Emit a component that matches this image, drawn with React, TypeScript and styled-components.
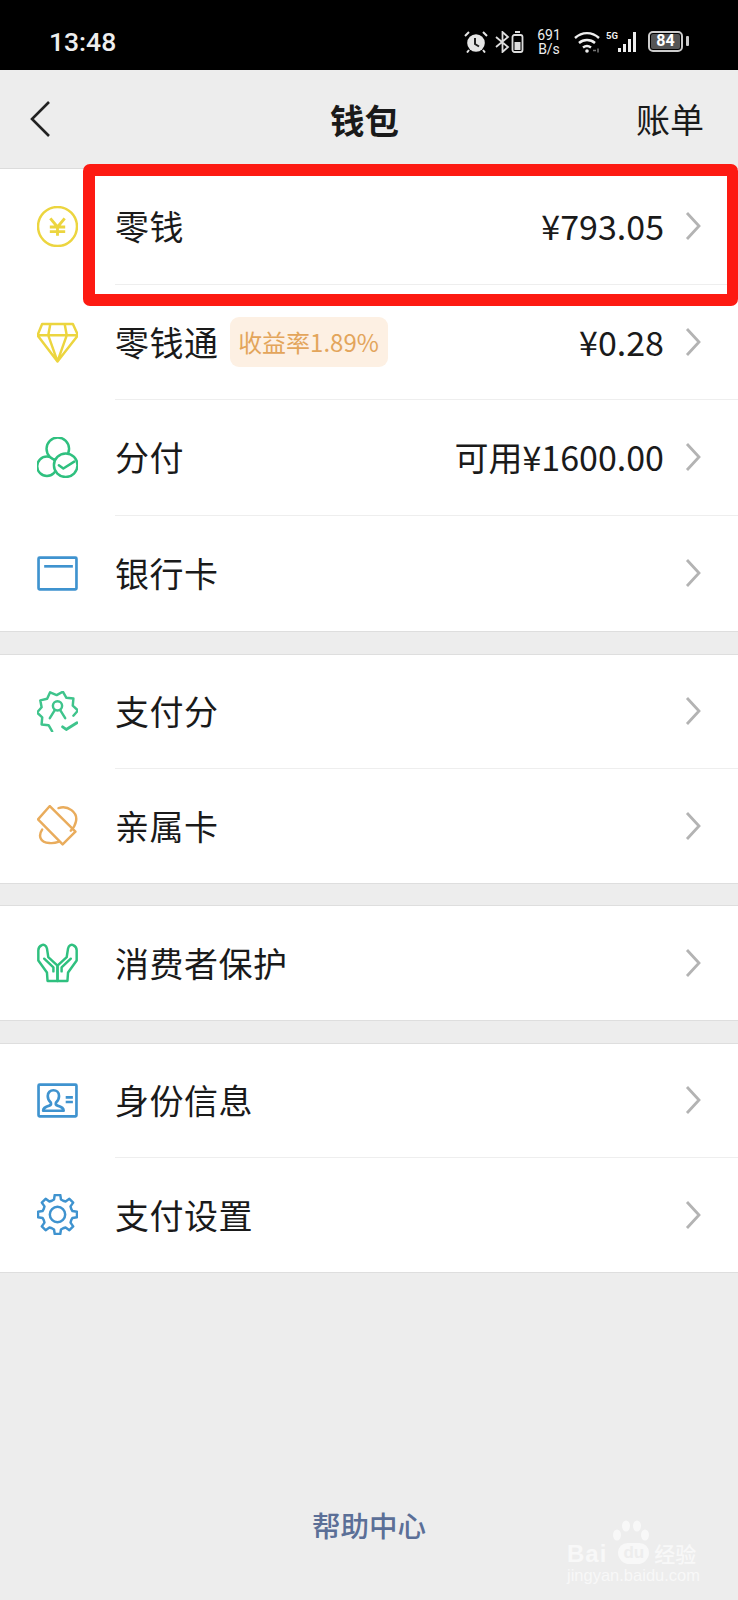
import React from "react";
import styled, { createGlobalStyle } from "styled-components";

const CJK = `"Noto Sans CJK SC", "Noto Sans", sans-serif`;

const GlobalStyle = createGlobalStyle`
  html, body {
    margin: 0;
    padding: 0;
    background: #ededed;
  }
  * {
    box-sizing: border-box;
  }
`;

const Page = styled.div`
  position: relative;
  width: 738px;
  height: 1600px;
  overflow: hidden;
  background: #ededed;
  font-family: ${CJK};
  color: #1a1a1a;
`;

const StatusBar = styled.div`
  height: 70px;
  background: #000;
  color: #eee;
  display: flex;
  align-items: center;
  padding: 13px 55px 0 49px;
  justify-content: space-between;
`;

const Clock = styled.span`
  font-family: Roboto, sans-serif;
  font-size: 26.5px;
  font-weight: 500;
`;

const StatusIcons = styled.div`
  display: flex;
  align-items: center;
`;

const Glyph = styled.svg<{ $gap?: number }>`
  display: block;
  margin-left: ${(p) => p.$gap ?? 0}px;
`;

const Speed = styled.div`
  font-family: Roboto, sans-serif;
  margin: 0 12px;
  width: 26px;
  text-align: center;
`;

const SpeedLine = styled.div`
  font-size: 14px;
  line-height: 14px;
  height: 14px;
`;

const BatteryBox = styled.div`
  width: 35px;
  height: 21px;
  margin-left: 8px;
  border: 2.5px solid #ccc;
  border-radius: 5px;
  padding: 1px;
  position: relative;
  display: flex;
  &::after {
    content: "";
    position: absolute;
    right: -7.5px;
    top: 3px;
    width: 2.5px;
    height: 10px;
    background: #ccc;
    border-radius: 1px;
  }
`;

const BatteryFill = styled.span`
  flex: 1;
  background: #555;
  border-radius: 2px;
  color: #fff;
  font-family: Roboto, sans-serif;
  font-weight: 700;
  font-size: 16px;
  line-height: 14px;
  text-align: center;
`;

const Header = styled.div`
  height: 99px;
  display: grid;
  grid-template-columns: 1fr auto 1fr;
  align-items: center;
  padding: 0 34px 0 25px;
  border-bottom: 1px solid #dcdcdc;
`;

const BackIcon = styled.svg`
  width: 24px;
  height: 38px;
  margin-left: 3px;
  display: block;
`;

const Title = styled.div`
  font-size: 34.5px;
  font-weight: 700;
  line-height: 1;
`;

const HeaderAction = styled.div`
  font-size: 34px;
  line-height: 1;
  justify-self: end;
`;

const Section = styled.div<{ $first?: boolean }>`
  background: #fff;
  margin-top: ${(p) => (p.$first ? 0 : 21.5)}px;
  border-bottom: 1px solid #dedede;
  border-top: ${(p) => (p.$first ? "none" : "1px solid #dedede")};
`;

const Row = styled.div<{ $tall?: boolean }>`
  height: ${(p) => (p.$tall ? 115.5 : 114)}px;
  display: flex;
  align-items: stretch;
  padding-left: 37px;
  &:last-child > div:last-child {
    border-bottom: none;
  }
`;

const IconSlot = styled.div`
  width: 41px;
  flex-shrink: 0;
  margin-right: 37px;
  display: flex;
  align-items: center;
  justify-content: center;
`;

const RowMain = styled.div`
  flex: 1;
  display: flex;
  align-items: center;
  padding-right: 37px;
  border-bottom: 1px solid #eeeeee;
`;

const Label = styled.span`
  font-size: 34px;
  line-height: 1;
  letter-spacing: 0.5px;
`;

const Badge = styled.span`
  margin-left: 11px;
  width: 158px;
  height: 50px;
  border-radius: 9px;
  background: #fdf0e3;
  color: #e3a55b;
  font-size: 24px;
  display: flex;
  align-items: center;
  justify-content: center;
  white-space: nowrap;
`;

const Value = styled.span`
  margin-left: auto;
  font-size: 34px;
  line-height: 1;
  color: #1a1a1a;
`;

const Chevron = styled.svg<{ $alone?: boolean }>`
  width: 16px;
  height: 30px;
  margin-left: ${(p) => (p.$alone ? "auto" : "21px")};
  flex-shrink: 0;
`;

const HelpLink = styled.div`
  margin-top: 234px;
  text-align: center;
  font-size: 28.5px;
  line-height: 36px;
  font-weight: 500;
  color: #5b6f97;
`;

const Highlight = styled.div`
  position: absolute;
  left: 83px;
  top: 164px;
  width: 655px;
  height: 142px;
  border: 12px solid #fd1a12;
  border-right-width: 11px;
  border-radius: 7px;
  pointer-events: none;
`;

const Watermark = styled.div`
  position: absolute;
  left: 567px;
  top: 1520px;
  width: 132px;
  color: #f8f8f8;
`;

const WatermarkTop = styled.div`
  height: 44px;
  position: relative;
  display: flex;
  align-items: flex-end;
`;

const WatermarkBai = styled.span`
  font-family: "Liberation Sans", sans-serif;
  font-weight: 700;
  font-size: 24px;
  line-height: 20px;
  letter-spacing: 1px;
`;

const WatermarkDu = styled.span`
  margin-left: 11px;
  width: 31px;
  height: 21px;
  border-radius: 10px 10px 12px 12px;
  background: #f8f8f8;
  color: #ededed;
  font-family: "Liberation Sans", sans-serif;
  font-weight: 700;
  font-size: 17px;
  line-height: 20px;
  text-align: center;
`;

const WatermarkJing = styled.span`
  margin-left: 5px;
  font-size: 21px;
  line-height: 22px;
  font-weight: 500;
`;

const WatermarkPaw = styled.svg`
  position: absolute;
  left: 45px;
  top: 0;
  width: 38px;
  height: 24px;
`;

const WatermarkUrl = styled.div`
  margin-top: 3px;
  font-family: "Liberation Sans", sans-serif;
  font-size: 16.5px;
  line-height: 17px;
  white-space: nowrap;
`;

const Line = ({ color, children, w = 2.4 }: { color: string; children: React.ReactNode; w?: number }) => (
  <svg width="41" height="41" viewBox="0 0 40 40" fill="none" stroke={color} strokeWidth={w} strokeLinecap="round" strokeLinejoin="round">
    {children}
  </svg>
);

// jagged outline of the pay-score badge, open at the lower right for the tick
const badgeOutline = (() => {
  const pts: string[] = [];
  for (let i = 0; i <= 19; i++) {
    const deg = 105 + i * 18;
    if (deg > 105 + 270) break;
    const r = i % 2 === 0 ? 20 : 16;
    const a = (deg * Math.PI) / 180;
    pts.push(`${(20 + r * Math.cos(a)).toFixed(1)} ${(20 + r * Math.sin(a)).toFixed(1)}`);
  }
  return "M" + pts.join("L");
})();

// eight-toothed cog
const gearOutline = (() => {
  const pts: string[] = [];
  for (let i = 0; i < 8; i++) {
    const c = (i * 45 - 90) * (Math.PI / 180);
    const at = (r: number, d: number) => {
      const a = c + (d * Math.PI) / 180;
      return `${(20 + r * Math.cos(a)).toFixed(1)} ${(20 + r * Math.sin(a)).toFixed(1)}`;
    };
    pts.push(at(14.5, -22.5), at(15, -13), at(19.2, -8), at(19.2, 8), at(15, 13));
  }
  return "M" + pts.join("L") + "Z";
})();

const CoinIcon = () => (
  <Line color="#ecd53f">
    <circle cx="20" cy="20" r="19" />
    <path d="M13 12l7 8.500 7-8.500M12.500 20.500h15M12.500 25h15M20 20.500V29" strokeWidth="2.800" strokeLinecap="butt" />
  </Line>
);

const DiamondIcon = () => (
  <Line color="#ecd53f">
    <path d="M5 2h30l5 11-20 25.500L.5 13zM.5 13h39M13 2l-2 11 9 25.500L29 13 27 2" />
  </Line>
);

const FenIcon = () => (
  <Line color="#2fc07f">
    <circle cx="9.700" cy="28.500" r="9.500" />
    <circle cx="20.300" cy="11.500" r="11" fill="#fff" />
    <circle cx="28" cy="27.500" r="11.500" fill="#fff" />
    <path d="M21.300 27.500l4.400 3.300 10.600-6.800" />
  </Line>
);

const CardIcon = () => (
  <Line color="#3f93cf" w={2.6}>
    <rect x="1.500" y="4.500" width="37" height="31" rx="1" />
    <path d="M7 13h28" strokeLinecap="butt" />
  </Line>
);

const ScoreIcon = () => (
  <Line color="#3fc48c">
    <path d={badgeOutline} />
    <circle cx="20" cy="14.500" r="4.500" />
    <path d="M12.500 26.500l5-8M27.500 26.500l-5-8" />
    <path d="M25 35l3.500 2.500L39 31" strokeWidth="2.800" />
  </Line>
);

const FamilyIcon = () => (
  <Line color="#e9ac5c">
    <path d="M12.500 1L1 14l24 24.500L37.500 26z" />
    <path d="M21 3c9-3 19 4 17 13-.5 3-2 6-5 9M5 24c-4 6-2 13 7 13 3 .5 6 0 9-1" />
  </Line>
);

const HandsIcon = () => (
  <Line color="#2fc07f">
    <path d="M20 22l-9-8.300-1.300-8.400C9 2.500 6.500 1 4.700 2 2.500 3 1.300 4 1.300 7v10l8.400 11.700.600 8.300H20z" />
    <path d="M20 22l9-8.300 1.300-8.400C31 2.500 33.500 1 35.300 2 37.500 3 38.700 4 38.700 7v10l-8.400 11.700-.600 8.300H20z" />
    <path d="M7 15.300l9 8.400v4M33 15.300l-9 8.400v4" />
  </Line>
);

const IdIcon = () => (
  <Line color="#3f93cf" w={2.6}>
    <rect x="1.500" y="4.500" width="37" height="31" rx="1" />
    <path d="M6 30c0-3 2.500-4 6-5 1.500-.5 2-1.500 1.500-3-1.800-1.500-3-3.500-3-6.500 0-3.500 2.500-5.500 5.500-5.500s5.500 2 5.500 5.500c0 3-1.200 5-3 6.500-.5 1.500 0 2.500 1.500 3 3.500 1 6 2 6 5z" />
    <path d="M28 17h7M28 21.500h7" strokeLinecap="butt" />
  </Line>
);

const GearIcon = () => (
  <Line color="#3f93cf">
    <circle cx="20" cy="20" r="7.500" />
    <path d={gearOutline} />
  </Line>
);

const ChevronRight = ({ alone }: { alone?: boolean }) => (
  <Chevron $alone={alone} viewBox="0 0 16 30" fill="none" stroke="#b3b3b3" strokeWidth="2.800">
    <path d="M2 2l12 13L2 28" />
  </Chevron>
);

type Item = { key: string; label: string; icon: React.ReactNode; value?: string; badge?: string };

const sections: Item[][] = [
  [
    { key: "change", label: "零钱", icon: <CoinIcon />, value: "¥793.05" },
    { key: "tong", label: "零钱通", icon: <DiamondIcon />, value: "¥0.28", badge: "收益率1.89%" },
    { key: "fen", label: "分付", icon: <FenIcon />, value: "可用¥1600.00" },
    { key: "bank", label: "银行卡", icon: <CardIcon /> },
  ],
  [
    { key: "score", label: "支付分", icon: <ScoreIcon /> },
    { key: "family", label: "亲属卡", icon: <FamilyIcon /> },
  ],
  [{ key: "protect", label: "消费者保护", icon: <HandsIcon /> }],
  [
    { key: "id", label: "身份信息", icon: <IdIcon /> },
    { key: "settings", label: "支付设置", icon: <GearIcon /> },
  ],
];

function StatusGlyphs() {
  return (
    <StatusIcons>
      {/* alarm */}
      <Glyph width="24" height="22" viewBox="0 0 24 22" fill="#e6e6e6">
        <circle cx="12" cy="12" r="8.800" />
        <path d="M11 7v6l4 2.500" stroke="#222" strokeWidth="2" fill="none" />
        <path d="M1 5l4-4M23 5l-4-4M5 19l-2 2.500M19 19l2 2.500" stroke="#e6e6e6" strokeWidth="2" fill="none" />
      </Glyph>
      {/* bluetooth + small battery */}
      <Glyph $gap={6} width="17" height="22" viewBox="0 0 17 22" fill="none" stroke="#ddd" strokeWidth="1.800">
        <path d="M2 6l12 10-5.500 5V1L14 6 2 16" />
      </Glyph>
      <Glyph width="13" height="22" viewBox="0 0 13 22" fill="none" stroke="#ddd" strokeWidth="1.800">
        <path d="M4 1h5" strokeWidth="2" />
        <rect x="1.500" y="4" width="10" height="17" rx="2" />
        <rect x="3.500" y="11" width="6" height="8" fill="#ddd" stroke="none" />
      </Glyph>
      <Speed>
        <SpeedLine>691</SpeedLine>
        <SpeedLine>B/s</SpeedLine>
      </Speed>
      {/* wifi */}
      <Glyph width="27" height="22" viewBox="0 0 27 22" fill="none" stroke="#eee" strokeWidth="2.400">
        <path d="M1 7c7-6.500 17-6.500 24 0M5 12c4.500-4 11.500-4 16 0M9 16.500c2.500-2 5.500-2 8 0" />
        <circle cx="13" cy="20" r="1.800" fill="#eee" stroke="none" />
        <path d="M19 19.500h3M24 17.500v4" stroke="#777" strokeWidth="1.500" />
      </Glyph>
      {/* 5G + signal */}
      <Glyph $gap={5} width="34" height="22" viewBox="0 0 34 22" fill="#eee">
        <text x="0" y="8" fontFamily="Roboto, sans-serif" fontWeight="700" fontSize="9.500">5G</text>
        <rect x="12" y="17" width="3" height="4" />
        <rect x="17" y="13" width="3" height="8" />
        <rect x="22" y="8" width="3" height="13" />
        <rect x="27" y="1" width="3" height="20" />
      </Glyph>
      <BatteryBox>
        <BatteryFill>84</BatteryFill>
      </BatteryBox>
    </StatusIcons>
  );
}

export default function App() {
  return (
    <Page>
      <GlobalStyle />
      <StatusBar>
        <Clock>13:48</Clock>
        <StatusGlyphs />
      </StatusBar>
      <Header>
        <BackIcon viewBox="0 0 24 38" fill="none" stroke="#222" strokeWidth="2.600">
          <path d="M21 2L4 19l17 17" />
        </BackIcon>
        <Title>钱包</Title>
        <HeaderAction>账单</HeaderAction>
      </Header>

      {sections.map((items, i) => (
        <Section key={i} $first={i === 0}>
          {items.map((item) => (
            <Row key={item.key} $tall={i === 0}>
              <IconSlot>{item.icon}</IconSlot>
              <RowMain>
                <Label>{item.label}</Label>
                {item.badge && <Badge>{item.badge}</Badge>}
                {item.value && <Value>{item.value}</Value>}
                <ChevronRight alone={!item.value} />
              </RowMain>
            </Row>
          ))}
        </Section>
      ))}

      <HelpLink>帮助中心</HelpLink>

      <Highlight />

      <Watermark>
        <WatermarkTop>
          <WatermarkBai>Bai</WatermarkBai>
          <WatermarkDu>du</WatermarkDu>
          <WatermarkJing>经验</WatermarkJing>
          <WatermarkPaw viewBox="0 0 38 24" fill="#f8f8f8">
            <ellipse cx="5" cy="15" rx="4" ry="5.500" />
            <ellipse cx="14" cy="6" rx="4" ry="5.500" />
            <ellipse cx="25" cy="6" rx="4" ry="5.500" />
            <ellipse cx="33" cy="15" rx="4" ry="5.500" />
          </WatermarkPaw>
        </WatermarkTop>
        <WatermarkUrl>jingyan.baidu.com</WatermarkUrl>
      </Watermark>
    </Page>
  );
}
